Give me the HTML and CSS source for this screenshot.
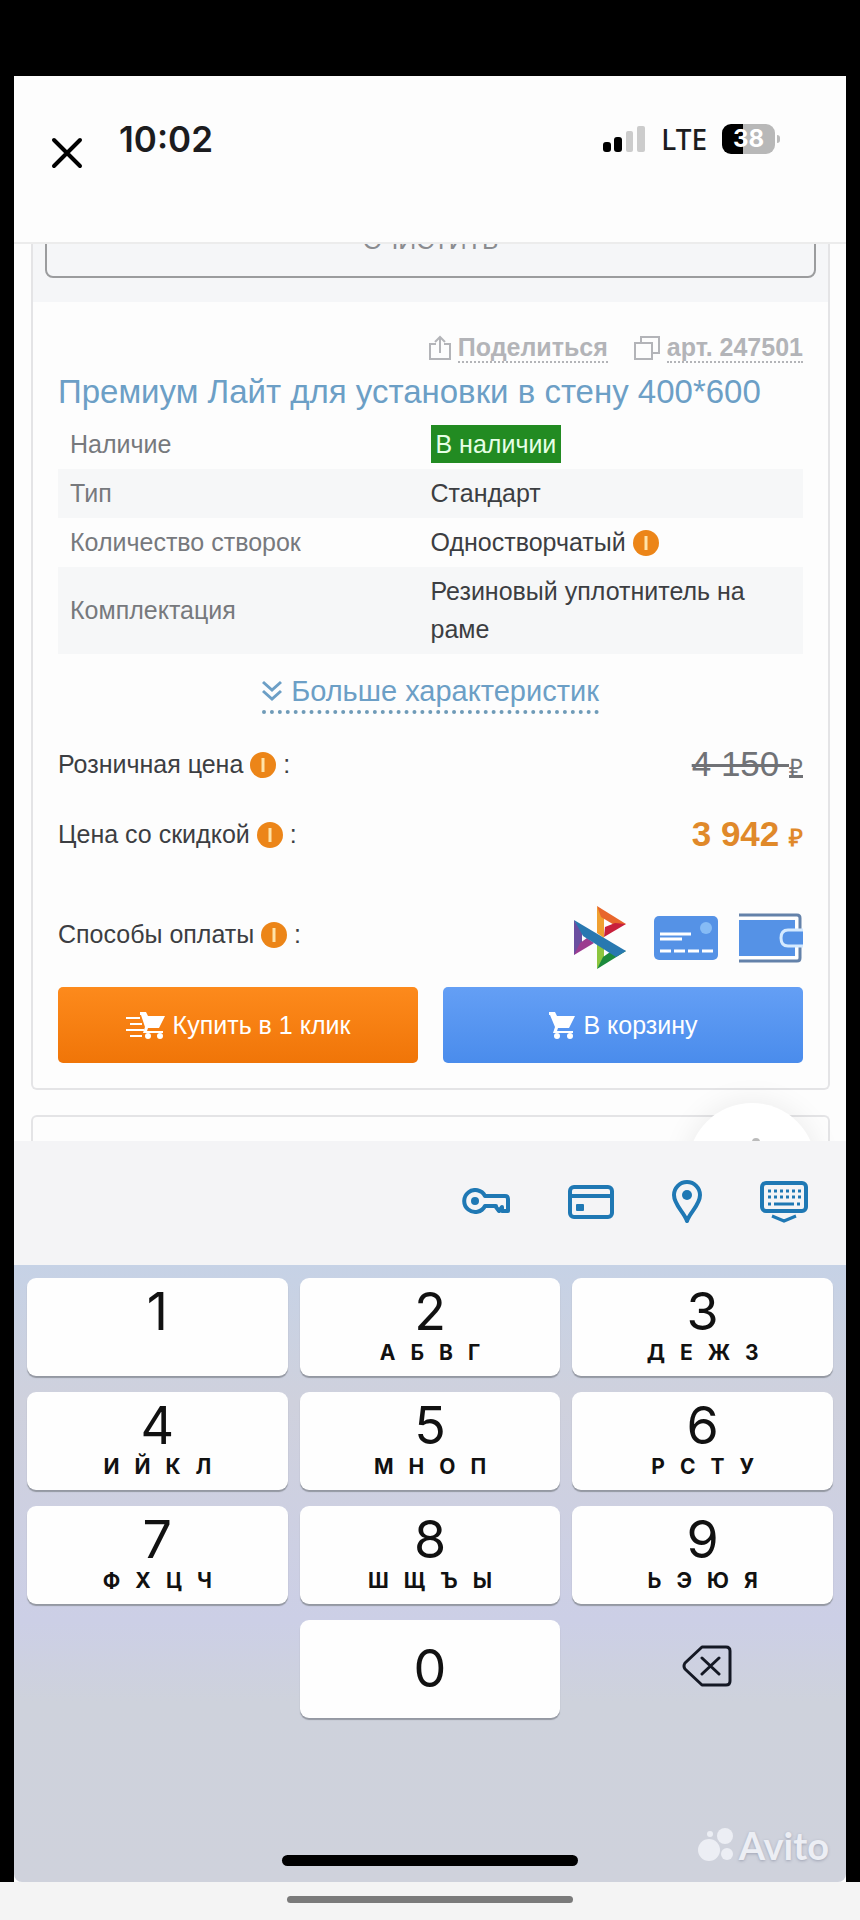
FILE: index.html
```html
<!DOCTYPE html>
<html lang="ru">
<head>
<meta charset="utf-8">
<meta name="viewport" content="width=device-width, initial-scale=1">
<title>Премиум Лайт для установки в стену 400*600</title>
<link rel="stylesheet" href="styles.css">
</head>
<body>
<div class="screen">
  <header class="status">
    <button class="close" type="button" aria-label="Закрыть">
      <svg width="32" height="32" viewBox="0 0 32 32" fill="none" stroke="#000" stroke-width="4" stroke-linecap="round"><path d="M3 3 29 29M29 3 3 29"/></svg>
    </button>
    <span class="time">10:02</span>
    <span class="indicators">
      <svg width="44" height="28" viewBox="0 0 44 28"><rect x="1" y="17" width="8" height="10" rx="3"/><rect x="12" y="12" width="8" height="15" rx="3"/><g fill="#ccc"><rect x="24" y="6" width="7" height="21" rx="2"/><rect x="35" y="1" width="8" height="26" rx="2"/></g></svg>
      <span class="network">LTE</span>
      <span class="battery">38</span>
    </span>
  </header>

  <main class="page">
    <article class="card">
      <div class="filter"><button class="clear" type="button">ОЧИСТИТЬ</button></div>
      <div class="product">
        <div class="actions">
          <a class="action" href="#">
            <svg width="24" height="28" viewBox="0 0 24 28" fill="none" stroke="currentColor" stroke-width="2"><path d="M8 10H2v15h20V10h-6M12 19V3M7 8l5-5 5 5"/></svg>
            <span class="dotted">Поделиться</span>
          </a>
          <a class="action" href="#">
            <svg width="28" height="28" viewBox="0 0 28 28" fill="none" stroke="currentColor" stroke-width="2"><path d="M2 9h17v16H2zM8 9V3h18v16h-7"/></svg>
            <span class="dotted">арт. 247501</span>
          </a>
        </div>
        <h1 class="title">Премиум Лайт для установки в стену 400*600</h1>
        <table class="specs">
          <tr><th scope="row">Наличие</th><td><span class="stock">В наличии</span></td></tr>
          <tr><th scope="row">Тип</th><td>Стандарт</td></tr>
          <tr><th scope="row">Количество створок</th><td>Одностворчатый <svg class="info" viewBox="0 0 26 26"><circle cx="13" cy="13" r="13" fill="#ec8518"/><path d="M13 6v14" stroke="#ffe3a8" stroke-width="3"/></svg></td></tr>
          <tr><th scope="row">Комплектация</th><td>Резиновый уплотнитель на раме</td></tr>
        </table>
        <a class="more" href="#">
          <svg width="20" height="22" viewBox="0 0 20 22" fill="none" stroke="currentColor" stroke-width="3"><path d="m1 2 9 8 9-8M1 11l9 8 9-8"/></svg>
          Больше характеристик
        </a>
        <div class="line">
          <span>Розничная цена <svg class="info" viewBox="0 0 26 26"><circle cx="13" cy="13" r="13" fill="#ec8518"/><path d="M13 6v14" stroke="#ffe3a8" stroke-width="3"/></svg> :</span>
          <del class="price old">4 150 <small>₽</small></del>
        </div>
        <div class="line">
          <span>Цена со скидкой <svg class="info" viewBox="0 0 26 26"><circle cx="13" cy="13" r="13" fill="#ec8518"/><path d="M13 6v14" stroke="#ffe3a8" stroke-width="3"/></svg> :</span>
          <strong class="price">3 942 <small>₽</small></strong>
        </div>
        <div class="line payment">
          <span class="payment-label">Способы оплаты <svg class="info" viewBox="0 0 26 26"><circle cx="13" cy="13" r="13" fill="#ec8518"/><path d="M13 6v14" stroke="#ffe3a8" stroke-width="3"/></svg> :</span>
          <span class="methods">
            <svg width="60" height="66" viewBox="0 0 60 66">
              <path fill="#f0a030" d="M24 1v27l7 5V13z"/><path fill="#e8662c" d="m24 1 29 18-10 2-15-9z"/><path fill="#c8203c" d="m53 19-22 13 1-10 10-4z"/>
              <path fill="#6b4fa0" d="M1 15v35l8-7V26z"/><path fill="#9c3c90" d="m1 50 20-12-7-5-7 5z"/>
              <path fill="#8cc63f" d="m24 36 7 5v12l-7 11z"/><path fill="#1c8a3c" d="M24 64 53 46l-10-3-13 9z"/>
              <path fill="#2878b0" d="m1 15 52 31-10 6-33-21z"/>
            </svg>
            <svg width="64" height="44" viewBox="0 0 64 44"><rect width="64" height="44" rx="5" fill="#5592e6"/><circle cx="52" cy="12" r="6" fill="#86bbf5"/><path stroke="#fff" stroke-width="3" d="M6 18h31M6 23h22M6 35h11M20 35h11M34 35h11M48 35h11"/></svg>
            <svg width="64" height="50" viewBox="0 0 64 50" fill="none"><path fill="#5592e6" d="M0 7h56v36H0z"/><path stroke="#6482aa" stroke-width="3" d="M0 2h58q3 0 3 3v40q0 3-3 3H0"/><path stroke="#fff" stroke-width="2" d="M0 5h55q3 0 3 3v34q0 3-3 3H0"/><path fill="#5592e6" stroke="#d5eaff" stroke-width="3" d="M64 17H49q-7 0-7 8t7 8h15"/></svg>
          </span>
        </div>
        <div class="buttons">
          <button class="buy one-click" type="button">
            <svg width="40" height="28" viewBox="0 0 40 28" fill="#fff"><path d="M0 6h14v2H0zM4 12h12v2H4zM0 18h18v2H0zM4 24h12v2H4z"/><path d="M14 1h6l2 4h17l-6 12H22l-1 3h16v2H17l2-6-4-12h-1z"/><circle cx="22" cy="25" r="3"/><circle cx="34" cy="25" r="3"/></svg>
            Купить в 1 клик
          </button>
          <button class="buy basket" type="button">
            <svg width="28" height="28" viewBox="0 0 28 28" fill="#fff"><path d="M1 1h6l2 4h18l-6 12H10l-1 3h16v2H5l2-6L2 4H1z"/><circle cx="9" cy="25" r="3"/><circle cx="22" cy="25" r="3"/></svg>
            В корзину
          </button>
        </div>
      </div>
    </article>
    <div class="card next"><button class="float" type="button" aria-label="Наверх"><i class="tip"></i></button></div>
  </main>

  <section class="keyboard">
    <div class="autofill">
      <button class="tool" type="button" aria-label="Пароли">
        <svg width="48" height="28" viewBox="0 0 48 28" fill="none" stroke="currentColor" stroke-width="4" stroke-linejoin="round"><path d="M23 8h20q3 0 3 3v12h-6v-4l-3 4-3-4v-1H23a11 11 0 1 1 0-10z"/><circle cx="13" cy="13" r="4" fill="currentColor" stroke="none"/></svg>
      </button>
      <button class="tool" type="button" aria-label="Карты">
        <svg width="46" height="34" viewBox="0 0 46 34" fill="none" stroke="currentColor" stroke-width="4"><rect x="2" y="2" width="42" height="30" rx="4"/><path d="M2 11h42"/><rect x="8" y="19" width="8" height="7" rx="1" fill="currentColor" stroke="none"/></svg>
      </button>
      <button class="tool" type="button" aria-label="Адреса">
        <svg width="30" height="44" viewBox="0 0 30 44" fill="none" stroke="currentColor" stroke-width="4" stroke-linejoin="round"><path d="M15 41C12 32 2 25 2 15a13 13 0 0 1 26 0c0 10-10 17-13 26z"/><circle cx="15" cy="15" r="5" fill="currentColor" stroke="none"/></svg>
      </button>
      <button class="tool" type="button" aria-label="Скрыть клавиатуру">
        <svg width="48" height="42" viewBox="0 0 48 42" fill="none" stroke="currentColor" stroke-width="3"><rect x="2" y="2" width="44" height="28" rx="4" stroke-width="4"/><path stroke-dasharray="3 3" d="M8 10h34M8 16h34"/><path d="M8 23h3M14 23h20M37 23h3M12 35l12 5 12-5"/></svg>
      </button>
    </div>
    <div class="keys">
      <button class="key" type="button"><b>1</b></button>
      <button class="key" type="button"><b>2</b><span class="letters"><i>А</i><i>Б</i><i>В</i><i>Г</i></span></button>
      <button class="key" type="button"><b>3</b><span class="letters"><i>Д</i><i>Е</i><i>Ж</i><i>З</i></span></button>
      <button class="key" type="button"><b>4</b><span class="letters"><i>И</i><i>Й</i><i>К</i><i>Л</i></span></button>
      <button class="key" type="button"><b>5</b><span class="letters"><i>М</i><i>Н</i><i>О</i><i>П</i></span></button>
      <button class="key" type="button"><b>6</b><span class="letters"><i>Р</i><i>С</i><i>Т</i><i>У</i></span></button>
      <button class="key" type="button"><b>7</b><span class="letters"><i>Ф</i><i>Х</i><i>Ц</i><i>Ч</i></span></button>
      <button class="key" type="button"><b>8</b><span class="letters"><i>Ш</i><i>Щ</i><i>Ъ</i><i>Ы</i></span></button>
      <button class="key" type="button"><b>9</b><span class="letters"><i>Ь</i><i>Э</i><i>Ю</i><i>Я</i></span></button>
      <button class="key zero" type="button"><b>0</b></button>
      <button class="erase" type="button" aria-label="Стереть">
        <svg width="50" height="42" viewBox="0 0 50 42" fill="none" stroke="#141824" stroke-width="3" stroke-linecap="round" stroke-linejoin="round"><path d="M20 2h24q4 0 4 4v30q0 4-4 4H20L3 24q-2-3 0-6zM20 13l17 16M37 13 20 29"/></svg>
      </button>
    </div>
    <div class="home">
      <span class="home-bar"></span>
      <span class="mark">
        <svg width="38" height="36" viewBox="0 0 38 36" fill="currentColor"><circle cx="12" cy="23" r="11"/><circle cx="28" cy="9" r="8"/><circle cx="13" cy="7" r="3"/><circle cx="30" cy="27" r="6"/></svg>
        Avito
      </span>
    </div>
  </section>
</div>
<footer class="system"><span class="system-bar"></span></footer>
</body>
</html>
```

FILE: styles.css
```css
* { box-sizing: border-box; }

body {
  margin: 0;
  min-height: 100vh;
  display: flex;
  flex-direction: column;
  background: #000;
  color: #3c3e42;
  font: 25px/38px "Liberation Sans", Arial, sans-serif;
}

button {
  margin: 0;
  padding: 0;
  border: 0;
  background: none;
  color: inherit;
  font: inherit;
}

svg { display: block; flex: none; }

.screen {
  flex: 1;
  display: flex;
  flex-direction: column;
  margin: 76px 14px 0;
  background: #fdfdfd;
}

/* Status bar */
.status {
  display: flex;
  align-items: flex-start;
  height: 168px;
  padding: 43px 71px 0 37px;
  border-bottom: 2px solid #ececec;
  color: #1c1c1e;
  font-family: Inter, "Noto Sans", sans-serif;
}
.close { margin-top: 18px; }
.time {
  margin-left: 36px;
  font-size: 35px;
  font-weight: 600;
  line-height: 40px;
}
.indicators {
  display: flex;
  align-items: center;
  gap: 15px;
  margin-left: auto;
  height: 40px;
}
.network {
  font: 500 28px/40px "Noto Sans", sans-serif;
}
.battery {
  position: relative;
  width: 53px;
  height: 30px;
  border-radius: 9px;
  background: linear-gradient(90deg, #000 40%, #b8b8b8 40%);
  color: #fff;
  font-size: 24px;
  font-weight: 700;
  line-height: 30px;
  text-align: center;
}
.battery::after {
  content: "";
  position: absolute;
  top: 11px;
  right: -5px;
  width: 3px;
  height: 8px;
  border-radius: 0 3px 3px 0;
  background: #bbb;
}

/* Product page */
.page { overflow: hidden; }
.card {
  margin: 0 16px 25px 17px;
  border: 2px solid #e4e4e6;
  border-top: 0;
  border-radius: 0 0 6px 6px;
}
.filter {
  display: flex;
  align-items: flex-end;
  height: 58px;
  padding: 0 12px 24px;
  overflow: hidden;
  background: #f5f6f8;
}
.clear {
  flex: 1;
  flex-shrink: 0;
  height: 76px;
  border: 2px solid #9b9c9e;
  border-radius: 8px;
  color: #8a8c90;
  font-size: 25px;
}
.product { padding: 27px 25px 25px; }
.actions {
  display: flex;
  justify-content: flex-end;
  gap: 25px;
  height: 38px;
}
.action {
  display: flex;
  align-items: center;
  gap: 6px;
  color: #b3b4b8;
  font-weight: 700;
  text-decoration: none;
}
.dotted {
  border-bottom: 2px dotted #b3b4b8;
  line-height: 28px;
}
.title {
  margin: 3px 0 6px;
  color: #6c9fc6;
  font-size: 33px;
  font-weight: 400;
  line-height: 44px;
}
.specs {
  width: 100%;
  border-collapse: collapse;
}
.specs th, .specs td {
  padding: 5px 0 6px;
  text-align: left;
  font-weight: 400;
}
.specs th {
  width: 50%;
  padding-left: 12px;
  color: #77797d;
}
.specs td { padding-right: 24px; }
.specs tr:nth-child(even) { background: #f6f7f8; }
.stock {
  display: inline-block;
  padding: 0 5px;
  background: #228b22;
  color: #e6ffe6;
}
.info {
  display: inline-block;
  width: 26px;
  height: 26px;
  vertical-align: -5px;
}
.more {
  display: flex;
  align-items: center;
  gap: 9px;
  width: fit-content;
  margin: 18px auto 27px;
  border-bottom: 4px dotted #6f9bb8;
  color: #6c9fc6;
  font-size: 29px;
  line-height: 38px;
  text-decoration: none;
}
.line {
  display: flex;
  align-items: center;
  justify-content: space-between;
  height: 46px;
  margin-bottom: 24px;
}
.price {
  color: #e0892a;
  font-size: 35px;
}
.price small {
  font: 700 24px "Liberation Serif", serif;
}
.price.old { color: #707276; }
.price.old small { font-weight: 400; }
.payment {
  height: 66px;
  margin: 48px 0 16px;
}
.payment-label { padding-bottom: 8px; }
.methods {
  display: flex;
  align-items: center;
  gap: 21px;
}
.buttons {
  display: grid;
  grid-template-columns: 1fr 1fr;
  gap: 25px;
}
.buy {
  display: flex;
  align-items: center;
  justify-content: center;
  gap: 7px;
  height: 76px;
  border-radius: 5px;
  color: #fff;
}
.one-click { background: linear-gradient(#fd8a1c, #f07508); }
.basket { background: linear-gradient(#649ff5, #4a8cec); }
.next {
  position: relative;
  height: 26px;
  margin-bottom: 0;
  border-top: 2px solid #e4e4e6;
  border-bottom: 0;
  border-radius: 6px 6px 0 0;
}
.float {
  position: absolute;
  top: -14px;
  right: 12px;
  width: 128px;
  height: 128px;
  border-radius: 50%;
  background: #fff;
  box-shadow: 0 0 30px rgba(0, 0, 0, 0.08);
}
.tip {
  position: absolute;
  top: 35px;
  left: 64px;
  width: 8px;
  height: 8px;
  border-radius: 50%;
  background: #bbb;
}

/* Keyboard */
.keyboard {
  flex: 1;
  display: flex;
  flex-direction: column;
  border-radius: 0 0 8px 8px;
  background: linear-gradient(#c6d2e6 124px, #cfd1dd 260px, #cccfe6 480px, #ced2dc 560px, #cfd2dc);
}
.autofill {
  display: flex;
  align-items: center;
  justify-content: flex-end;
  gap: 58px;
  height: 124px;
  padding: 0 38px 2px 0;
  background: #f4f4f6;
  color: #1f78b4;
}
.keys {
  display: grid;
  grid-template-columns: repeat(3, 1fr);
  grid-auto-rows: 98px;
  gap: 16px 12px;
  padding: 13px 13px 0;
}
.key {
  display: flex;
  flex-direction: column;
  align-items: center;
  padding-top: 6px;
  border-radius: 9px;
  background: #fefefe;
  box-shadow: 0 2px 1px #9498a2;
  color: #111;
  font-family: Inter, "Noto Sans", sans-serif;
}
.key b {
  font-size: 52px;
  font-weight: 400;
  line-height: 56px;
}
.letters {
  display: flex;
  gap: 15px;
  font-size: 21px;
  font-weight: 700;
  line-height: 26px;
}
.letters i { font-style: normal; }
.zero {
  grid-column: 2;
  justify-content: center;
  padding: 0;
}
.erase {
  display: flex;
  align-items: center;
  justify-content: center;
  padding: 0 0 6px 8px;
}
.home {
  flex: 1;
  display: grid;
  grid-template-columns: 1fr 37% 1fr;
  align-items: end;
  padding: 0 17px 16px;
}
.home-bar {
  grid-column: 2;
  height: 11px;
  border-radius: 6px;
  background: #000;
}
.mark {
  display: flex;
  align-items: center;
  justify-content: flex-end;
  gap: 4px;
  color: #eceef4;
  font: 700 38px/42px Lato, "Open Sans", sans-serif;
  text-shadow: 0 1px 3px rgba(90, 95, 120, 0.4);
}

.system {
  display: flex;
  justify-content: center;
  height: 38px;
  padding-top: 14px;
  background: #f4f4f4;
}
.system-bar {
  width: 286px;
  height: 7px;
  border-radius: 4px;
  background: #7a7a7a;
}
```
